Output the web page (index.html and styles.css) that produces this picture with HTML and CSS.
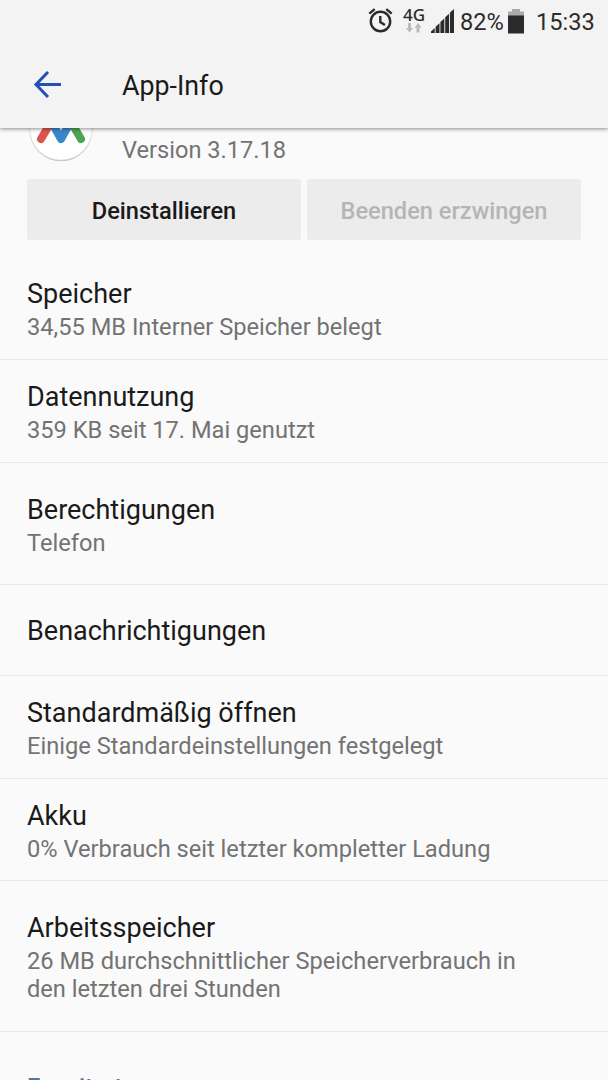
FILE: index.html
```html
<!DOCTYPE html>
<html lang="de">
<head>
    <meta charset="UTF-8">
    <meta name="viewport" content="width=device-width, initial-scale=1.0">
    <title>App-Info</title>
    <link rel="stylesheet" href="styles.css">
</head>
<body>
    <div class="screen">
        <header class="header">
            <div class="status-bar">
                <svg class="icon-alarm" width="26" height="26" viewBox="0 0 26 26" fill="none" stroke="#2b2b2b" stroke-width="2.4">
                    <circle cx="13.500" cy="13.500" r="9.700"/>
                    <path d="M13.300 8v6l4.600 3M2.300 5.700L7.700 1.200M24.700 5.700l-5.400-4.500"/>
                </svg>
                <div class="network">
                    <span class="network-type">4G</span>
                    <svg width="16" height="10" viewBox="0 0 16 10" fill="#bcbcbc">
                        <path d="M2 0h3v5h2L3.500 9.500 0 5h2z"/>
                        <path d="M10.500 9.500h3v-5h2L12 0 8.500 4.500h2z"/>
                    </svg>
                </div>
                <svg class="icon-signal" width="24" height="24" viewBox="0 0 24 24" fill="#2b2b2b">
                    <path d="M0 24v-1.500L3.700 19v5zM4.600 24v-6.200l3.900-3.500V24zM9.400 24V13l3.900-3.500V24zM14.200 24V8.200l3.900-3.500V24zM19 24V3.500L23 0v24z"/>
                </svg>
                <span class="battery-level">82%</span>
                <svg class="icon-battery" width="16" height="25" viewBox="0 0 16 25">
                    <path d="M0 2.500h4V0h8v2.500h4V7H0z" fill="#aaa"/>
                    <path d="M0 6.500h16V24.500H0z" fill="#2b2b2b"/>
                </svg>
                <span class="clock">15:33</span>
            </div>
            <div class="toolbar">
                <svg class="icon-back" width="28" height="28" viewBox="0 0 28 28" fill="none" stroke="#2350b5" stroke-width="3">
                    <path d="M28 13.500H3.500M15 1L3 13.500 15 26"/>
                </svg>
                <h1 class="toolbar-title">App-Info</h1>
            </div>
        </header>

        <main class="content">
            <div class="app-summary">
                <svg class="app-logo" width="66" height="66" viewBox="0 0 66 66">
                    <circle cx="33" cy="33.800" r="31.500" fill="#c4c4c4"/>
                    <circle cx="33" cy="32.800" r="31.300" fill="#fff" stroke="#ddd" stroke-width=".6"/>
                    <g fill="none" stroke-width="8" stroke-linecap="round" stroke-linejoin="round">
                        <path d="M13 43l10-17" stroke="#de5350"/>
                        <path d="M53 43L43 26" stroke="#49a551"/>
                        <path d="M25.500 29.500L33 43l7.500-13.500" stroke="#3a86cb"/>
                    </g>
                </svg>
                <p class="app-version">Version 3.17.18</p>
            </div>

            <div class="actions">
                <button class="btn">Deinstallieren</button>
                <button class="btn" disabled>Beenden erzwingen</button>
            </div>

            <ul class="settings">
                <li class="item">
                    <h2>Speicher</h2>
                    <p>34,55 MB Interner Speicher belegt</p>
                </li>
                <li class="item">
                    <h2>Datennutzung</h2>
                    <p>359 KB seit 17. Mai genutzt</p>
                </li>
                <li class="item item-tall">
                    <h2>Berechtigungen</h2>
                    <p>Telefon</p>
                </li>
                <li class="item item-single">
                    <h2>Benachrichtigungen</h2>
                </li>
                <li class="item">
                    <h2>Standardmäßig öffnen</h2>
                    <p>Einige Standardeinstellungen festgelegt</p>
                </li>
                <li class="item">
                    <h2>Akku</h2>
                    <p>0% Verbrauch seit letzter kompletter Ladung</p>
                </li>
                <li class="item item-tall">
                    <h2>Arbeitsspeicher</h2>
                    <p>26 MB durchschnittlicher Speicherverbrauch in<br>den letzten drei Stunden</p>
                </li>
            </ul>

            <h3 class="section-title">Erweitert</h3>
        </main>
    </div>
</body>
</html>
```
FILE: styles.css
```css
* {
    box-sizing: border-box;
    margin: 0;
    padding: 0;
}

body {
    font-family: Roboto, sans-serif;
    background-color: #fafafa;
    color: #1a1a1a;
}

.screen {
    height: 1080px;
    display: flex;
    flex-direction: column;
    overflow: hidden;
}

.header {
    position: relative;
    z-index: 1;
    flex: none;
    height: 128px;
    background-color: #f3f3f3;
    box-shadow: 0 1px 4px rgba(0, 0, 0, 0.45);
}

.status-bar {
    display: flex;
    align-items: center;
    height: 42px;
    padding-left: 367px;
    color: #2b2b2b;
    font-size: 23.6px;
    white-space: nowrap;
}

.network {
    display: flex;
    flex-direction: column;
    align-items: center;
    width: 22px;
    margin: -3px 6px 0 10px;
}

.network-type {
    font-family: "Noto Sans", sans-serif;
    font-size: 17px;
    font-weight: 500;
    line-height: 17px;
}

.battery-level {
    width: 43px;
    margin: 0 5px;
}

.battery-level,
.clock {
    padding-top: 1px;
}

.clock {
    margin-left: 12px;
}

.toolbar {
    display: flex;
    align-items: center;
    height: 86px;
    padding: 0 0 1px 33px;
}

.toolbar-title {
    margin: 2px 0 0 61px;
    font-size: 26.8px;
    font-weight: 400;
}

.content {
    flex: 1;
    overflow: hidden;
}

.app-summary {
    display: flex;
    align-items: flex-end;
    height: 66px;
    margin-top: -32px;
    padding-left: 28px;
}

.app-version {
    margin: 0 0 -2px 28px;
    color: #737373;
    font-size: 23.6px;
    line-height: 28px;
}

.actions {
    display: flex;
    gap: 6px;
    padding: 17px 27px;
}

.btn {
    flex: 1;
    height: 61px;
    padding-top: 2px;
    border: none;
    border-radius: 3px;
    background-color: #ececec;
    color: #1a1a1a;
    font-family: inherit;
    font-size: 23.6px;
    font-weight: 500;
}

.btn:disabled {
    color: #b5b5b5;
}

.settings {
    list-style: none;
}

.item {
    height: 102.5px;
    padding: 20px 27px 0;
    border-bottom: 1px solid #e8e8e8;
}

.item:first-child {
    height: 103px;
}

.item h2 {
    font-size: 27px;
    font-weight: 400;
    line-height: 34px;
}

.item p {
    margin-top: 2px;
    color: #737373;
    font-size: 23.65px;
    line-height: 28px;
}

.item-tall {
    height: auto;
    padding: 30px 27px 27.5px;
}

.item-single {
    height: 91px;
    padding-top: 29px;
}

.section-title {
    padding: 41px 27px 0;
    color: #5a73a0;
    font-size: 23.65px;
    font-weight: 500;
    line-height: 28px;
}
```
